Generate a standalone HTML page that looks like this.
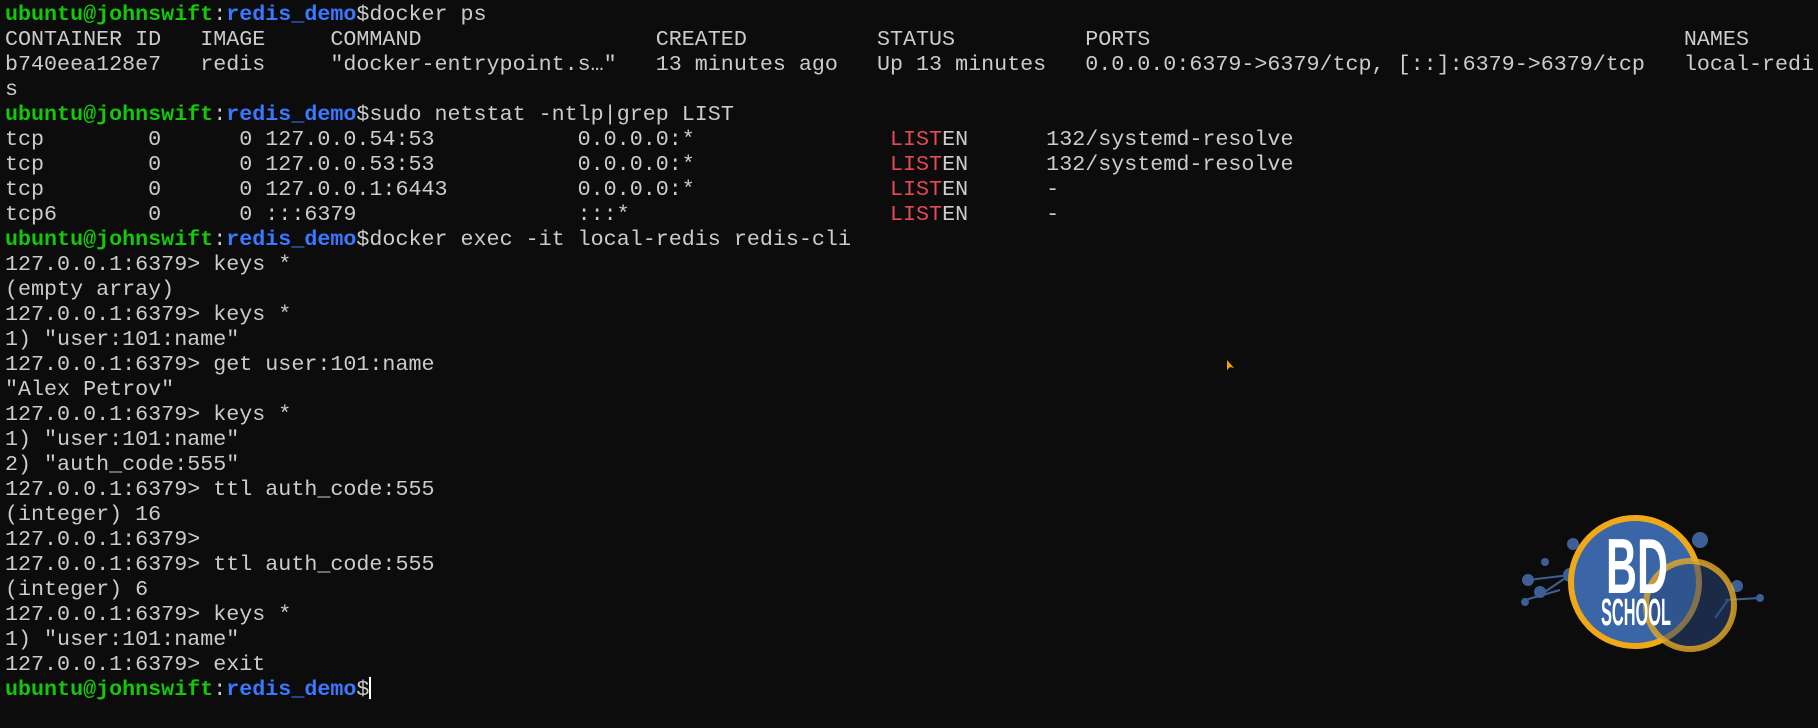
<!DOCTYPE html>
<html><head><meta charset="utf-8"><style>
html,body{margin:0;padding:0;background:#0c0c0c;width:1818px;height:728px;overflow:hidden}
pre{position:absolute;left:5px;top:2px;margin:0;font-family:"Liberation Mono","DejaVu Sans Mono",monospace;font-size:21.7px;line-height:25px;color:#cccccc}
.g{color:#16c60c;font-weight:bold}.b{color:#3b78ff;font-weight:bold}.r{color:#e74856}
.cur{display:inline-block;width:2px;height:22px;background:#fff;vertical-align:-4px}
</style></head><body>
<pre><span class="g">ubuntu@johnswift</span>:<span class="b">redis_demo</span>$docker ps
CONTAINER ID   IMAGE     COMMAND                  CREATED          STATUS          PORTS                                         NAMES
b740eea128e7   redis     "docker-entrypoint.s…"   13 minutes ago   Up 13 minutes   0.0.0.0:6379->6379/tcp, [::]:6379->6379/tcp   local-redi
s
<span class="g">ubuntu@johnswift</span>:<span class="b">redis_demo</span>$sudo netstat -ntlp|grep LIST
tcp        0      0 127.0.0.54:53           0.0.0.0:*               <span class="r">LIST</span>EN      132/systemd-resolve
tcp        0      0 127.0.0.53:53           0.0.0.0:*               <span class="r">LIST</span>EN      132/systemd-resolve
tcp        0      0 127.0.0.1:6443          0.0.0.0:*               <span class="r">LIST</span>EN      -
tcp6       0      0 :::6379                 :::*                    <span class="r">LIST</span>EN      -
<span class="g">ubuntu@johnswift</span>:<span class="b">redis_demo</span>$docker exec -it local-redis redis-cli
127.0.0.1:6379> keys *
(empty array)
127.0.0.1:6379> keys *
1) "user:101:name"
127.0.0.1:6379> get user:101:name
"Alex Petrov"
127.0.0.1:6379> keys *
1) "user:101:name"
2) "auth_code:555"
127.0.0.1:6379> ttl auth_code:555
(integer) 16
127.0.0.1:6379>
127.0.0.1:6379> ttl auth_code:555
(integer) 6
127.0.0.1:6379> keys *
1) "user:101:name"
127.0.0.1:6379> exit
<span class="g">ubuntu@johnswift</span>:<span class="b">redis_demo</span>$<span class="cur"></span></pre>
<svg style="position:absolute;left:1226px;top:359px" width="10" height="14"><path d="M1 1 L1 11 L4 8 L8 9 Z" fill="#f5a300"/></svg>
<svg style="position:absolute;left:1500px;top:500px" width="318" height="180">
<g stroke="#3d5f96" stroke-width="2" fill="#3d5f96">
<line x1="28" y1="80" x2="70" y2="75"/><line x1="40" y1="95" x2="70" y2="75"/><line x1="70" y1="75" x2="85" y2="45"/><line x1="85" y1="45" x2="100" y2="30"/><line x1="25" y1="100" x2="60" y2="90"/>
<circle cx="28" cy="80" r="5"/><circle cx="70" cy="75" r="6"/><circle cx="40" cy="92" r="5"/><circle cx="73" cy="44" r="5"/><circle cx="45" cy="62" r="3"/><circle cx="25" cy="102" r="3"/>
<line x1="225" y1="100" x2="260" y2="98"/><line x1="228" y1="100" x2="215" y2="118"/><circle cx="237" cy="86" r="5"/><circle cx="200" cy="40" r="7"/><circle cx="260" cy="98" r="3"/>
</g>
<circle cx="135" cy="82" r="64" fill="#3a66a8" stroke="#f0a818" stroke-width="6"/>
<circle cx="190" cy="105" r="44" fill="rgba(40,70,120,0.55)" stroke="rgba(230,170,40,0.8)" stroke-width="6"/>
<text x="137" y="93" text-anchor="middle" fill="#fff" font-family="Liberation Sans Narrow, Liberation Sans, sans-serif" font-weight="bold" font-size="78" textLength="62" lengthAdjust="spacingAndGlyphs">BD</text>
<text x="136" y="125" text-anchor="middle" fill="#fff" font-family="Liberation Sans Narrow, Liberation Sans, sans-serif" font-weight="bold" font-size="38" textLength="70" lengthAdjust="spacingAndGlyphs">SCHOOL</text>
</svg>
</body></html>
